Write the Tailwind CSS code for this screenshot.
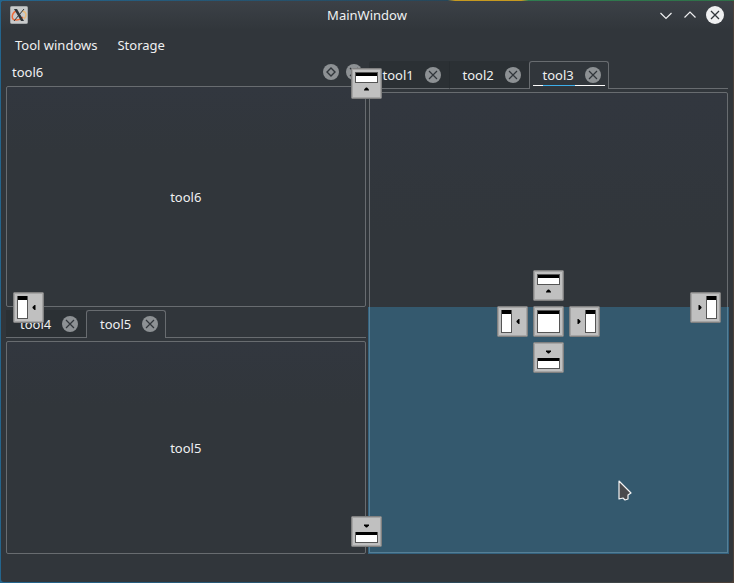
<!DOCTYPE html>
<html lang="en">
<head>
<meta charset="utf-8">
<meta name="viewport" content="width=device-width, initial-scale=1">
<title>MainWindow</title>
<script src="https://cdn.jsdelivr.net/npm/@tailwindcss/browser@4"></script>
</head>
<body class="flex h-screen flex-col overflow-hidden bg-[linear-gradient(90deg,#24658d_0%,#27475a_61%,#c79a20_62%,#c79a20_71%,#2f7d50_72%,#2f7048_100%)] font-['Noto_Sans',sans-serif] text-[13px] leading-[18px] text-[#eff0f1]">
<svg class="hidden">
  <defs>
    <symbol id="close" viewBox="0 0 16 16"><circle cx="8" cy="8" r="8" fill="#8d9194"/><path d="M4 4l8 8M12 4l-8 8" stroke="#31363b" stroke-width="1.2" fill="none"/></symbol>
    <symbol id="float" viewBox="0 0 16 16"><circle cx="8" cy="8" r="8" fill="#8d9194"/><path d="M8 4l4 4-4 4-4-4z" stroke="#31363b" stroke-width="1.4" fill="none"/></symbol>
    <symbol id="plate" viewBox="0 0 31 31"><rect x=".5" y=".5" width="30" height="30" rx="1" fill="#c0c0c0" stroke="#808080"/><rect x="1.5" y="1.5" width="28" height="28" fill="none" stroke="#a4a4a4"/></symbol>
    <symbol id="dock-top" viewBox="0 0 31 31"><use href="#plate"/><rect x="4.5" y="4.5" width="22" height="10" fill="#fff" stroke="#555"/><path d="M5 5h21v3H5z"/><path d="M13 22.500v-1l2-2h1l2 2v1z"/></symbol>
    <symbol id="dock-bottom" viewBox="0 0 31 31"><use href="#plate"/><rect x="4.5" y="16.5" width="22" height="10" fill="#fff" stroke="#555"/><path d="M5 16h21v3H5z"/><path d="M13 8.500v1l2 2h1l2-2v-1z"/></symbol>
    <symbol id="dock-left" viewBox="0 0 31 31"><use href="#plate"/><rect x="4.5" y="4.5" width="10" height="22" fill="#fff" stroke="#555"/><path d="M5 4h9v4H5z"/><path d="M22.500 13h-1l-2 2v1l2 2h1z"/></symbol>
    <symbol id="dock-right" viewBox="0 0 31 31"><use href="#plate"/><rect x="16.5" y="4.5" width="10" height="22" fill="#fff" stroke="#555"/><path d="M17 4h9v4h-9z"/><path d="M8.500 13h1l2 2v1l-2 2h-1z"/></symbol>
    <symbol id="dock-center" viewBox="0 0 31 31"><use href="#plate"/><rect x="4.5" y="4.5" width="22" height="22" fill="#fff" stroke="#555"/><path d="M5 5h21v3H5z"/></symbol>
  </defs>
</svg>
<div class="mt-px flex min-h-0 flex-1 flex-col bg-[linear-gradient(90deg,#24658d,#2b4a5c_60%,#4a4039)] p-px pt-0">
<div class="flex min-h-0 flex-1 flex-col rounded-[3px] bg-[#31363b]">
  <header class="grid h-[29px] shrink-0 grid-cols-[1fr_auto_1fr] items-center rounded-t-[3px] bg-linear-to-b from-[#3c4147] to-[#31363b] pr-[9px] pb-px pl-[9px]">
    <svg class="size-[18px]" viewBox="0 0 18 18" aria-hidden="true">
      <rect x=".5" y=".5" width="17" height="17" rx="1" fill="#c8cacb" stroke="#a5a8aa"/>
      <path d="M6 5C1 8 1 14 6 14c3 0 5-1 7-3" fill="none" stroke="#ee6c3a" stroke-width="1.500"/>
      <path d="M12 5c5 1 5 5 2 8" fill="none" stroke="#e8b878" stroke-width="1.500"/>
      <path d="M4 3h3l7 12h-3z" fill="#303538"/><path d="M14 3L4 15" stroke="#303538"/>
    </svg>
    <h1>MainWindow</h1>
    <div class="flex items-center justify-end gap-2">
      <button aria-label="Minimize"><svg class="block h-[18px] w-4" viewBox="0 0 16 18" fill="none" stroke="#eff0f1" stroke-width="1.200"><path d="M2.500 7l5.500 5.500L13.500 7"/></svg></button>
      <button aria-label="Maximize"><svg class="block h-[18px] w-4" viewBox="0 0 16 18" fill="none" stroke="#eff0f1" stroke-width="1.200"><path d="M2.500 11.500L8 6l5.500 5.500"/></svg></button>
      <button aria-label="Close"><svg class="block size-[18px]" viewBox="0 0 18 18"><circle cx="9" cy="9" r="9" fill="#eff0f1"/><path d="M5 5l8 8M13 5l-8 8" stroke="#31363b" stroke-width="1.300"/></svg></button>
    </div>
  </header>
  <nav class="flex h-[30px] shrink-0 items-center gap-5 px-[14px]">
    <button>Tool windows</button>
    <button>Storage</button>
  </nav>

  <main class="relative mr-[5px] mb-7 ml-[5px] grid min-h-0 flex-1 grid-cols-2 gap-[3px]">
    <div class="grid min-h-0 grid-rows-[247fr_247fr]">
      <section class="flex min-h-0 flex-col" aria-label="tool6">
        <div class="flex h-[26px] shrink-0 items-center gap-[7px] pr-1 pb-[3px] pl-[6px]">
          <h2 class="flex-1">tool6</h2>
          <button aria-label="Float tool6"><svg class="block size-4"><use href="#float"/></svg></button>
          <button aria-label="Close tool6"><svg class="block size-4"><use href="#close"/></svg></button>
        </div>
        <div class="flex flex-1 items-center justify-center rounded-[2px] border border-[#686c70] bg-linear-to-b from-[#32373f] to-[#31363b] to-30%">tool6</div>
      </section>
      <section class="flex min-h-0 flex-col pt-[3px]" aria-label="Tabs tool4 and tool5">
        <div class="flex h-7 shrink-0">
          <div class="flex w-20 items-center justify-between border-y border-t-transparent border-b-[#686c70] bg-[#2b3034] pr-2 pl-[14px]">
            <button>tool4</button><button aria-label="Close tool4"><svg class="block size-4"><use href="#close"/></svg></button>
          </div>
          <div class="flex w-20 items-center justify-between rounded-t-[3px] border border-b-0 border-[#686c70] pr-[7px] pb-px pl-[13px]">
            <button>tool5</button><button aria-label="Close tool5"><svg class="block size-4"><use href="#close"/></svg></button>
          </div>
          <div class="flex-1 border-b border-[#686c70]"></div>
        </div>
        <div class="mt-[3px] flex flex-1 items-center justify-center rounded-[2px] border border-[#686c70] bg-linear-to-b from-[#32373f] to-[#31363b] to-30%">tool5</div>
      </section>
    </div>

    <section class="relative flex min-h-0 flex-col pt-px" aria-label="Tabs tool1, tool2 and tool3">
      <div class="flex h-7 shrink-0">
        <div class="flex w-20 items-center justify-between rounded-tl-[3px] border-y border-t-transparent border-b-[#686c70] bg-[#2b3034] pr-2 pl-[14px]">
          <button>tool1</button><button aria-label="Close tool1"><svg class="block size-4"><use href="#close"/></svg></button>
        </div>
        <div class="flex w-20 items-center justify-between border-y border-l border-t-transparent border-b-[#686c70] border-l-[#272c30] bg-[#2b3034] pr-2 pl-[13px]">
          <button>tool2</button><button aria-label="Close tool2"><svg class="block size-4"><use href="#close"/></svg></button>
        </div>
        <div class="relative flex w-20 items-center justify-between rounded-t-[3px] border border-b-0 border-[#686c70] pr-[7px] pb-px pl-[13px]">
          <button>tool3</button><button aria-label="Close tool3"><svg class="block size-4"><use href="#close"/></svg></button>
          <span class="absolute inset-x-[3px] bottom-[3px] h-px bg-[linear-gradient(90deg,#fcfcfc_10px,#3daee9_10px,#3daee9_42px,#fcfcfc_42px)]"></span>
        </div>
        <div class="flex-1 border-b border-[#686c70]"></div>
      </div>
      <div class="mt-[3px] flex-1 rounded-[2px] border border-[#686c70] bg-linear-to-b from-[#32373f] to-[#31363b] to-30%"></div>
      <div class="absolute -right-px bottom-0 -left-px h-1/2 border border-t-0 border-[#34627e] bg-[#34596e]"><div class="h-full border border-t-0 border-[#557f96]"></div></div>
      <div class="absolute inset-x-0 top-7 bottom-0 grid place-content-center">
        <div class="grid grid-cols-3 gap-[5px]">
          <button class="col-start-2" aria-label="Dock above"><svg class="block size-[31px]"><use href="#dock-top"/></svg></button>
          <button class="col-start-1" aria-label="Dock left"><svg class="block size-[31px]"><use href="#dock-left"/></svg></button>
          <button aria-label="Dock as tab"><svg class="block size-[31px]"><use href="#dock-center"/></svg></button>
          <button aria-label="Dock right"><svg class="block size-[31px]"><use href="#dock-right"/></svg></button>
          <button class="col-start-2" aria-label="Dock below"><svg class="block size-[31px]"><use href="#dock-bottom"/></svg></button>
        </div>
      </div>
      <svg class="absolute right-24 bottom-[52px] h-[22px] w-[14px]" viewBox="0 0 14 22" aria-hidden="true"><path d="M1 1l12 12-3 2v4l-3 1-2-2-4 1z" fill="#4a4a4c" stroke="#f4f4f4" stroke-width="1.200" stroke-linejoin="round"/></svg>
    </section>

    <div class="pointer-events-none absolute inset-x-[7px] top-2 bottom-[7px] grid grid-cols-[31px_1fr_31px] grid-rows-[31px_1fr_31px] items-center justify-items-center">
      <button class="pointer-events-auto col-start-2 row-start-1 mr-[2px]" aria-label="Dock to top edge"><svg class="block size-[31px]"><use href="#dock-top"/></svg></button>
      <button class="pointer-events-auto col-start-2 row-start-3 mr-[2px]" aria-label="Dock to bottom edge"><svg class="block size-[31px]"><use href="#dock-bottom"/></svg></button>
      <button class="pointer-events-auto col-start-1 row-start-2" aria-label="Dock to left edge"><svg class="block size-[31px]"><use href="#dock-left"/></svg></button>
      <button class="pointer-events-auto col-start-3 row-start-2" aria-label="Dock to right edge"><svg class="block size-[31px]"><use href="#dock-right"/></svg></button>
    </div>
  </main>
</div>
</div>
</body>
</html>
